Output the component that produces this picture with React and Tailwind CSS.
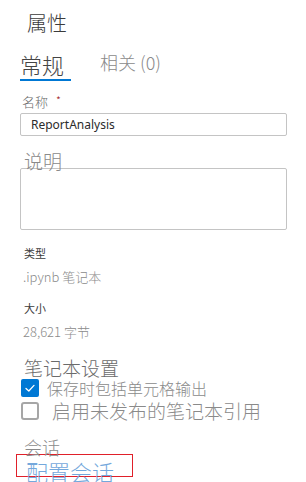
import React from 'react';

const CJK = { fontFamily: '"Noto Sans CJK SC", "Noto Sans", sans-serif' };

const Checkbox = ({ checked }) =>
  checked ? (
    <span className="w-[18px] h-[18px] rounded-[2px] bg-[#0078d4] flex items-center justify-center shrink-0">
      <svg width="12" height="12" viewBox="0 0 12 12" fill="none">
        <path d="M2 6.4 L4.8 9 L10 3.4" stroke="#fff" strokeWidth="1.3" strokeLinecap="round" strokeLinejoin="round" />
      </svg>
    </span>
  ) : (
    <span className="w-[18px] h-[18px] rounded-[3px] border-2 border-[#a6a6a6] bg-white shrink-0" />
  );

export default function App() {
  return (
    <div className="w-[306px] h-[482px] overflow-hidden bg-white font-light" style={CJK}>
      <div className="pl-[20px] pr-[19px]">
        {/* header */}
        <div className="pl-[7px] pt-[11px] text-[20px] leading-[24px] text-[#3b3b3b]">属性</div>

        {/* tabs */}
        <div className="mt-[16px] flex items-start">
          <div className="w-[51px] pb-[2px] border-b-2 border-[#0078d4] text-[22px] leading-[26px] text-[#444]">常规</div>
          <div className="ml-[29px] text-[18px] leading-[22px] text-[#8a8a8a]">相关 (0)</div>
        </div>

        {/* name */}
        <div className="mt-[13px] pl-[2px] text-[13px] leading-[16px] text-[#6b6b6b] flex items-start">
          名称<span className="ml-[8px] text-[11px] leading-[12px] text-[#a4262c]">*</span>
        </div>
        <div
          className="mt-[3px] h-[23px] border border-[#c4c4c4] rounded-[2px] flex items-center pl-[10px] text-[12px] font-normal text-[#2b2b2b]"
          style={{ fontFamily: '"Noto Sans", "Open Sans", sans-serif' }}
        >
          ReportAnalysis
        </div>

        {/* description */}
        <div className="mt-[15px] h-[17px] pl-[4px] text-[19px] leading-[19px] text-[#8a8a8a]">说明</div>
        <div className="h-[62px] border border-[#c4c4c4] rounded-[2px]" />

        {/* type / size */}
        <div className="mt-[16px] pl-[4px] text-[11px] leading-[14px] font-normal text-[#3b3b3b]">类型</div>
        <div className="mt-[9px] pl-[3px] text-[13px] leading-[16px] text-[#8a8a8a]">.ipynb 笔记本</div>
        <div className="mt-[16px] pl-[4px] text-[11px] leading-[14px] font-normal text-[#3b3b3b]">大小</div>
        <div className="mt-[9px] pl-[3px] text-[13px] leading-[16px] text-[#8a8a8a]">28,621 字节</div>

        {/* notebook settings */}
        <div className="mt-[17px] pl-[4px] text-[19px] leading-[22px] text-[#6b6b6b]">笔记本设置</div>
        <div className="flex items-center h-[18px] pl-[1px]">
          <Checkbox checked />
          <span className="ml-[8px] text-[16px] leading-[18px] text-[#8a8a8a]">保存时包括单元格输出</span>
        </div>
        <div className="mt-[5px] flex items-center h-[18px] pl-[1px]">
          <Checkbox />
          <span className="ml-[13px] text-[19px] leading-[18px] text-[#8a8a8a]">启用未发布的笔记本引用</span>
        </div>

        {/* session */}
        <div className="mt-[17px] pl-[4px] text-[18px] leading-[20px] text-[#8a8a8a]">会话</div>
        <div className="-mt-[3px] -ml-[4px] w-[117px] h-[23px] border border-[#e0202a] pl-[9px] pt-[4px]">
          <span className="text-[22px] leading-[24px] text-[#74a8dc] whitespace-nowrap">配置会话</span>
        </div>
      </div>
    </div>
  );
}
